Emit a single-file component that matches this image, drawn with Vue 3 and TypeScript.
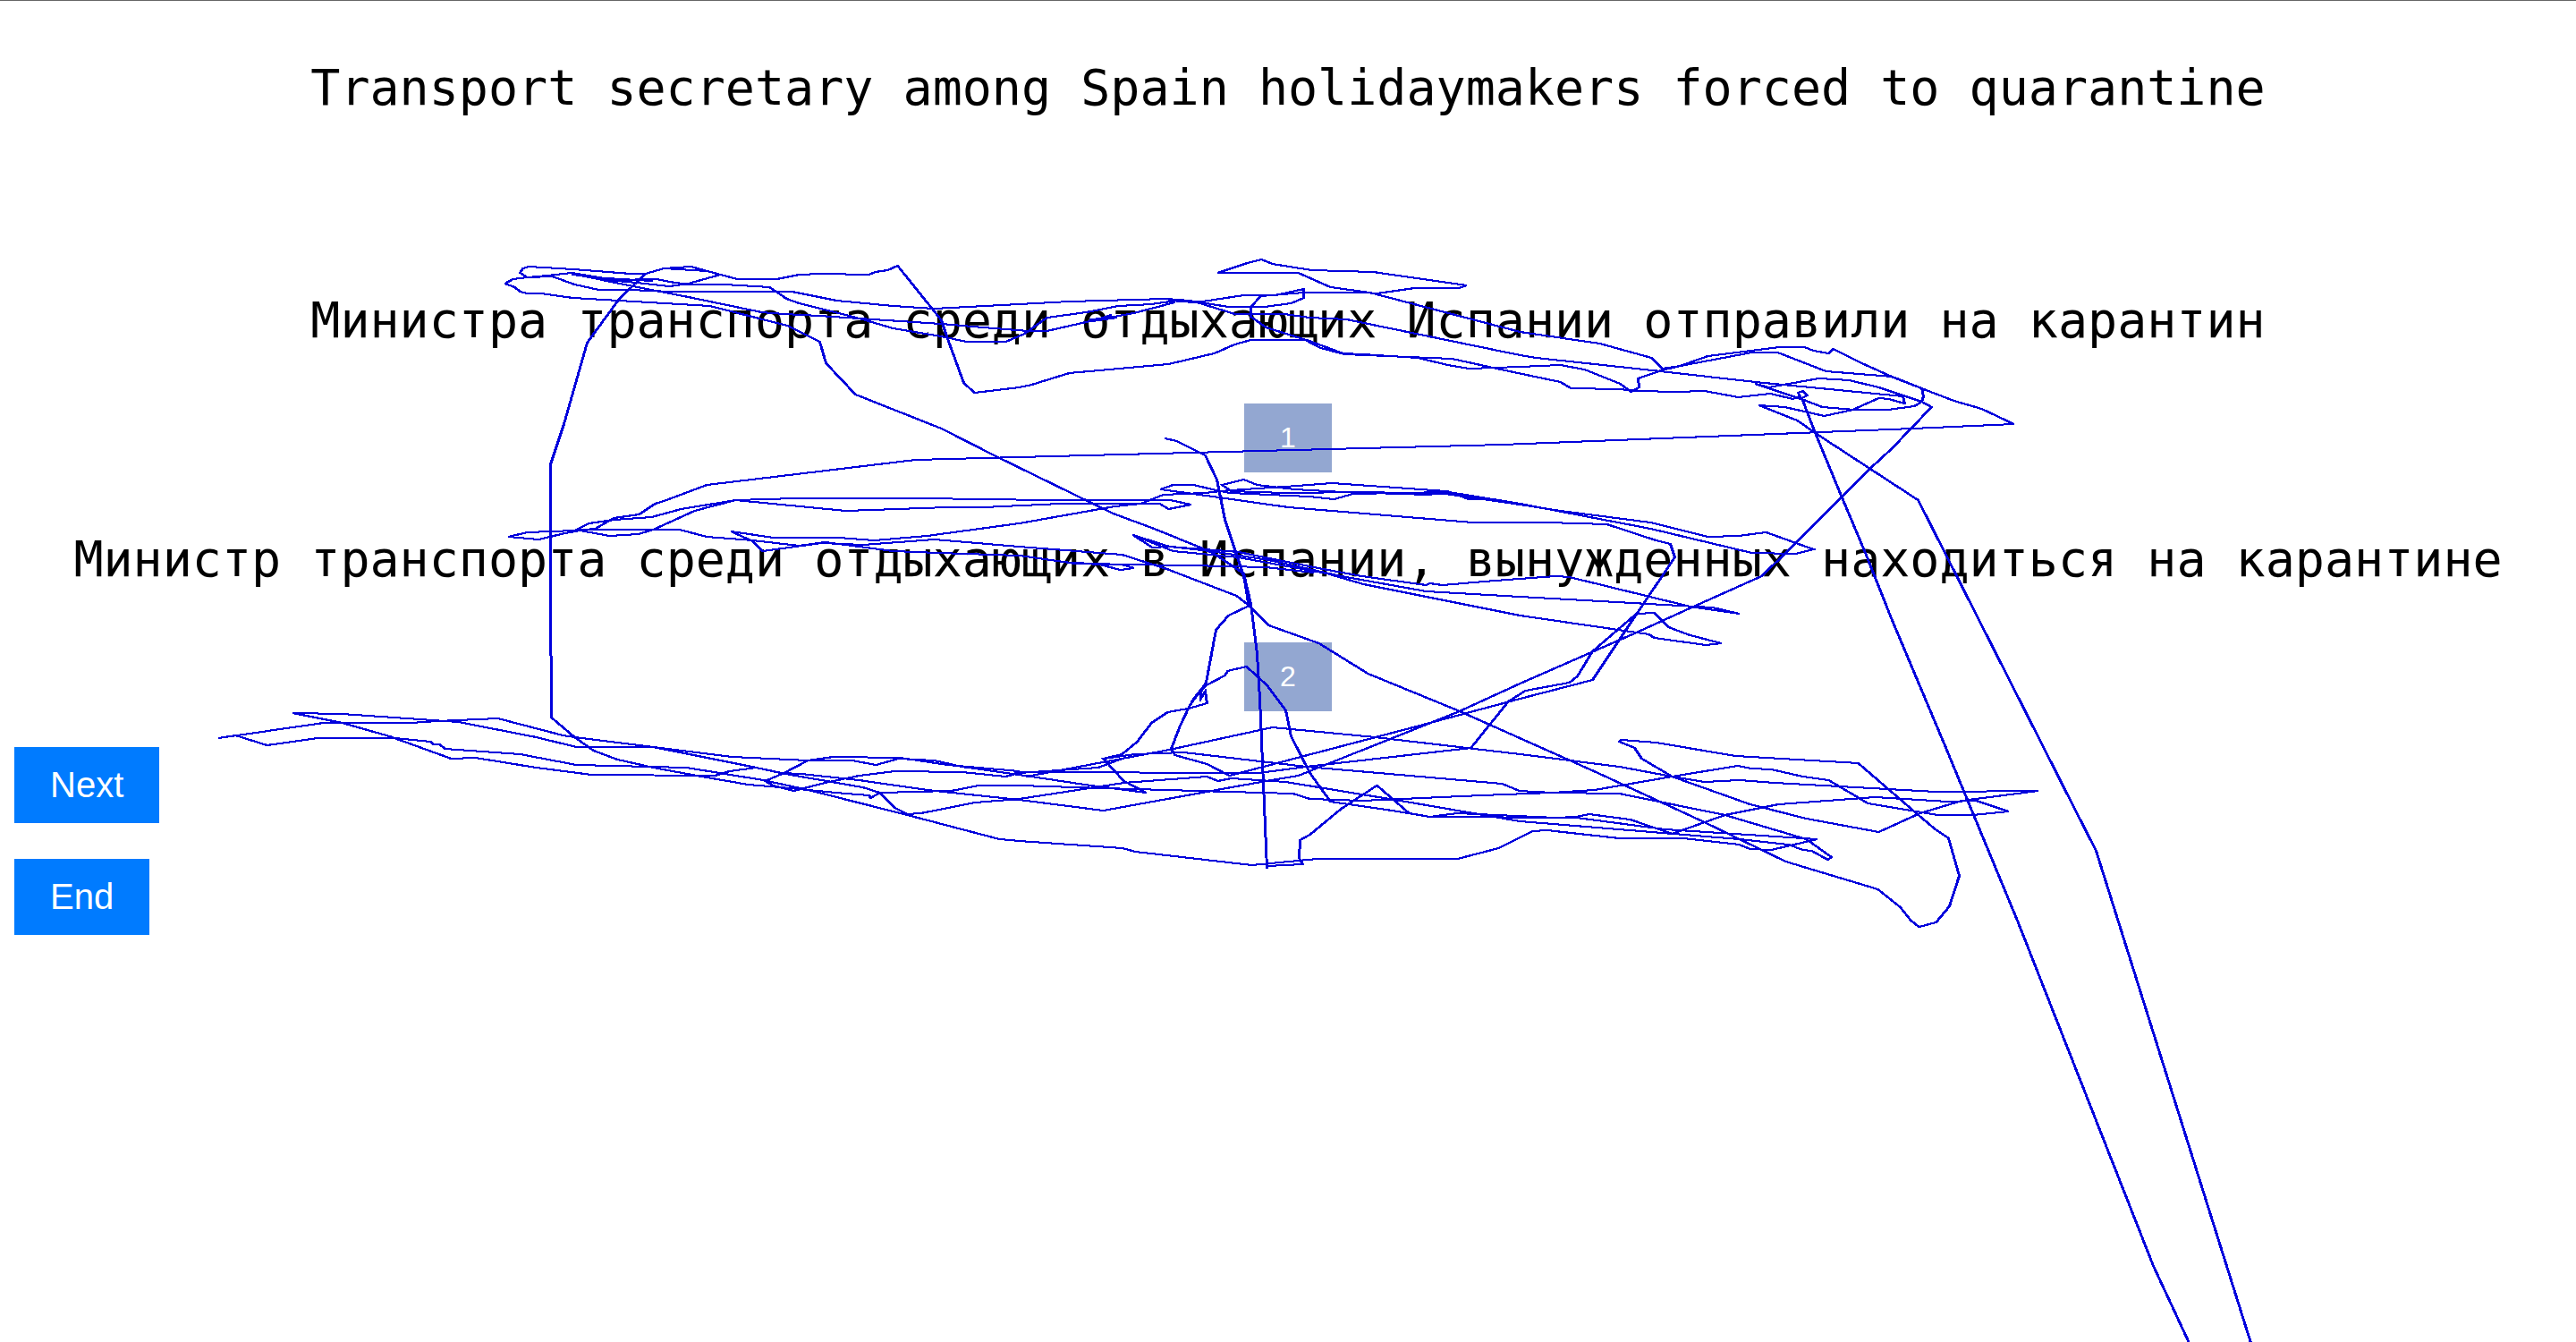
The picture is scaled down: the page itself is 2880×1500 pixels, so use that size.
<script setup lang="ts">
interface Translation {
  id: number
  text: string
}

const source = 'Transport secretary among Spain holidaymakers forced to quarantine'

const translations: Translation[] = [
  { id: 1, text: 'Министра транспорта среди отдыхающих Испании отправили на карантин' },
  { id: 2, text: 'Министр транспорта среди отдыхающих в Испании, вынужденных находиться на карантине' },
]

// Gaze trace: each entry is one run of x,y samples on a 2880 x 1500 plane.
const trace: string[] = [
  // first translation
  '722,305 706,305 641,300 592,297 585,299 582,304 590,309 613,307 640,304 687,312 735,311 749,314 770,317 810,317 861,320 880,333 894,338 938,349 965,356 999,366 1053,375 1081,381 1125,381 1146,372 1171,354 1215,348 1251,341 1288,339 1316,335 1345,336 1391,329 1427,329 1458,322 1458,332 1444,338 1414,342 1374,342 1330,335 1305,333',
  '565,316 574,311 590,309 618,308 643,317 670,323 705,323 750,325 886,325 936,335 999,341 1045,344 1140,339 1196,336 1305,333 1318,336 1339,337 1381,350 1437,350 1464,354 1506,356 1700,396 1718,399 1848,413 1963,426 2128,442 2130,450 2112,445 2101,444 2072,457 2040,464 1996,454 1967,452 2010,469 2030,483 2145,558 2174,615 2320,903 2344,950 2517,1500',
  '565,316 576,320 582,325 590,327 605,327 641,332 794,341 881,363 917,381 924,405 957,440 1053,478 1114,509 1245,573 1291,590 1345,612 1358,618 1391,640 1396,673',
  '640,305 708,319 770,331 852,348 877,350 917,352 961,355 1053,361 1100,365 1150,369 1171,369 1219,358 1268,349 1314,337',
  '1219,356 1249,354 1222,358 1243,351',
  '640,305 690,313 712,315 749,319 770,316 806,306 791,302 743,299 722,305 693,333 657,382 631,473 616,518 616,660 617,801 643,823 664,838 691,848 731,857 785,867 837,876 873,879 904,882 946,886 972,888 974,891 984,885',
  '640,306 678,310 712,312 730,313',
  '743,299 773,297 791,302 806,306 825,311 869,311 894,306 919,305 972,306 979,303 993,301 1004,296 1041,342 1053,357 1059,375 1078,427 1090,438 1140,432 1154,429 1196,416 1307,406 1358,394 1381,384 1399,379 1460,379 1477,388 1504,395 1575,398 1624,400 1674,411 1745,426 1757,433 1810,434 1833,436 1875,437 1906,436 1944,443 1980,439 2005,445 2013,442 2011,438 2016,436 2021,441 2015,444 2030,483 2059,553 2086,617 2115,690 2174,830 2210,917 2256,1028 2408,1414 2448,1500',
  '1362,304 1395,293 1411,289 1423,294 1467,301 1536,303 1640,318 1632,321 1582,321 1540,327 1525,326 1458,326 1410,330 1399,342 1399,353 1416,365 1464,380 1502,394 1524,395 1586,399 1619,407 1643,411 1700,409 1745,407 1772,412 1812,428 1824,437 1833,432 1832,422 1858,413 1879,408 1910,397 1990,387 2018,387 2028,391 2045,394 2050,389 2082,405 2120,422 2185,447 2216,456 2252,473 2139,478 1680,496 1100,511 1024,513 791,541 743,559 733,562 715,574 687,578 666,590 641,592',
  '1362,304 1452,304 1488,320 1532,326 1700,370 1789,383 1847,399 1859,411 1879,408 1959,393 1988,393 2042,414 2116,420 2149,433 2151,442 2149,448 2141,453 2111,457 2074,457 2038,454 2017,446 1963,428 1978,432 2034,422 2068,424 2101,432 2149,448 2160,454 2116,500 2091,523 1998,616 1970,643 1894,677 1828,707 1700,763 1630,795 1492,850 1452,866 1416,872 1234,905 1140,893 1037,882 961,871 896,864',
  // second translation
  '569,599 590,594 643,592 659,584 687,580 729,577 762,568 823,558 890,556 1030,556 1171,558 1309,558 1332,563 1307,568 1297,562 1274,562 1186,562 1100,566 1060,566 946,570 823,558 777,570 731,591 714,596 682,598 649,592 632,595 603,602 569,599',
  '643,592 659,591 739,591 760,591 791,599 842,603 894,609 923,605 999,615 1050,617 1140,620 1197,628 1255,630 1329,631 1416,633 1469,639',
  '1197,628 1230,630 1253,636 1268,634 1255,630 1199,629',
  '818,593 865,600 938,600 978,603 1037,598 1140,584 1247,565 1276,562 1301,552 1347,550 1376,547 1437,543 1490,539 1617,548 1643,557 1670,557 1700,563 1745,570 1846,583 1910,599 1944,598 1975,594 2028,613 2008,618 1959,617 1846,590 1757,573 1700,562',
  '818,593 842,604 853,615 919,606 965,608 1045,602 1140,610 1255,619 1305,635 1383,665 1396,675 1419,698 1475,718 1530,752 1630,793 1740,842 1787,863 1906,918 1997,962 2100,993 2125,1013 2137,1028 2146,1035 2165,1030 2180,1012 2191,978 2179,936 2163,925 2143,908 2078,852 1941,844 1852,829 1813,826 1811,828 1828,835 1836,847 1870,867 1957,898 2020,914 2101,929 2147,908 2194,894 2279,883 2165,884 1985,874 1945,871 1906,873 1870,867 1811,856 1700,842 1538,823 1423,812 1308,837 1148,867',
  '1700,562 1620,549 1513,551 1492,557 1464,554 1376,550 1360,547 1335,541 1312,541 1298,546 1349,553 1441,566 1647,583 1730,583 1797,585 1852,603 1868,607 1873,622 1829,687 1781,759 1700,780 1588,810 1375,866 1350,853 1314,843 1310,836 1320,810 1331,787 1349,762 1360,703 1374,687 1397,676 1391,643 1370,580 1361,535 1348,508 1316,492 1303,489',
  '1391,640 1399,674 1406,730 1409,780 1417,970',
  '1620,548 1598,552 1502,549 1448,546 1406,541 1391,535 1367,541 1377,548 1437,550 1524,549 1617,551 1700,563',
  '1267,597 1289,611 1308,610 1385,616 1469,633 1523,643 1595,653 1599,651 1613,653 1672,648 1740,643 1755,644 1890,677 1945,685 1915,678 1700,666 1595,660 1500,643 1419,625 1354,615 1308,610 1267,597',
  '1267,597 1312,615 1385,622 1484,640 1525,652 1700,687 1844,708 1850,712 1886,717 1908,720 1925,718 1890,709 1866,700 1850,684 1830,685 1781,727 1764,755 1755,762 1706,771 1687,783 1645,835 1461,856 1408,863 1140,862 1125,867',
  // below the second translation
  '1282,885 1257,872 1234,847 1255,842 1272,828 1288,807 1306,795 1329,791 1350,785 1348,772 1343,780 1343,770 1333,783 1349,765 1370,754 1373,749 1394,744 1417,765 1438,793 1444,822 1465,863 1488,895 1557,905 1599,912 1630,908 1740,913 1763,912 1777,909 1823,915 1870,931 1929,910 1989,898 2097,890 2178,895 2210,894 2246,906 2206,910 2167,910 2089,897 2045,871 2016,867 1981,859 1959,858 1943,855 1870,867 1783,882 1736,885 1699,883 1680,875 1461,856 1324,840 1270,842 1234,847',
  '1140,892 1257,874 1350,867 1362,872 1377,869 1438,873 1572,895 1700,917 1945,937 2000,943 2016,949 2026,950 2044,960 2048,957 2020,937 1929,910 1811,886 1736,885 1657,888 1523,894 1465,892 1446,886 1339,883 1234,880 1140,877 1095,877 1064,883 984,885',
  '245,824 264,821 299,832 356,824 442,824 482,828 485,831 492,831 498,836 582,842 645,854 768,857 854,871 904,882 1015,910 1118,937 1140,939 1255,947 1270,951 1400,966 1473,959 1630,959 1676,947 1714,928 1730,927 1811,936 1882,936 1945,943 1957,948 1981,949 2032,937 1862,926 1763,913 1599,912 1576,908 1540,877 1500,903 1465,932 1454,938 1453,958 1457,965 1417,967',
  '245,824 362,807 459,807 490,805 557,802 630,821 643,823 731,834 819,845 904,849 953,849 980,854 1005,847 1045,849 1076,856 1140,865 1220,877 1282,885',
  '1007,846 1060,854 1140,861',
  '328,796 383,797 513,806 600,823 645,834 731,834 846,857 884,865 965,879 984,885 1001,902 1015,909 1030,908 1091,896 1140,892',
  '328,796 383,807 436,822 505,847 532,846 600,857 662,865 800,866 816,861 846,857 873,863 896,864',
  '1007,846 932,845 904,849 877,863 856,872 865,877 888,883 923,874 961,866 1001,861 1076,862 1125,867 1140,863 1228,857 1255,847',
]
</script>

<template>
  <main class="page">
    <h1 class="sentence">{{ source }}</h1>

    <div class="translations">
      <section v-for="item in translations" :key="item.id" class="translation">
        <p class="sentence">{{ item.text }}</p>
        <button type="button" class="button choice">{{ item.id }}</button>
      </section>
    </div>

    <nav class="actions">
      <button type="button" class="button">Next</button>
      <button type="button" class="button">End</button>
    </nav>

    <svg class="trace" viewBox="0 0 2880 1500" aria-hidden="true">
      <!-- Two passes one unit apart give a pen that is wider than it is tall. -->
      <g id="pen">
        <polyline v-for="(points, index) in trace" :key="index" :points="points" />
      </g>
      <use href="#pen" x="-1" />
    </svg>
  </main>
</template>

<style>
body {
  margin: 0;
  background: #fff;
}
</style>

<style scoped>
.page {
  position: relative;
  box-sizing: border-box;
  display: flex;
  flex-direction: column;
  min-height: 100vh;
  padding-top: 62px;
  border-top: 1px solid #666;
  overflow: hidden;
  color: #000;
}

.sentence {
  margin: 0;
  font: 400 55px/70px "DejaVu Sans Mono", monospace;
  text-align: center;
}

.translations {
  display: flex;
  flex-direction: column;
  gap: 62px;
  margin: 190px 0 40px;
}

.translation {
  display: flex;
  flex-direction: column;
  align-items: center;
  gap: 58px;
}

.button {
  padding: 20px 40px;
  border: 0;
  border-radius: 0;
  background: #007bff;
  color: #fff;
  font: 400 40px/45px "Liberation Sans", Arial, sans-serif;
}

.choice {
  background: #93a7d1;
  font-size: 32px;
  line-height: 37px;
}

.actions {
  display: flex;
  flex-direction: column;
  align-items: flex-start;
  gap: 40px;
  padding: 0 16px;
}

.trace {
  position: absolute;
  top: 0;
  left: 0;
  width: 100%;
  pointer-events: none;
}

.trace polyline {
  fill: none;
  stroke: #0000dc;
  stroke-width: 2;
  shape-rendering: crispEdges;
}
</style>
